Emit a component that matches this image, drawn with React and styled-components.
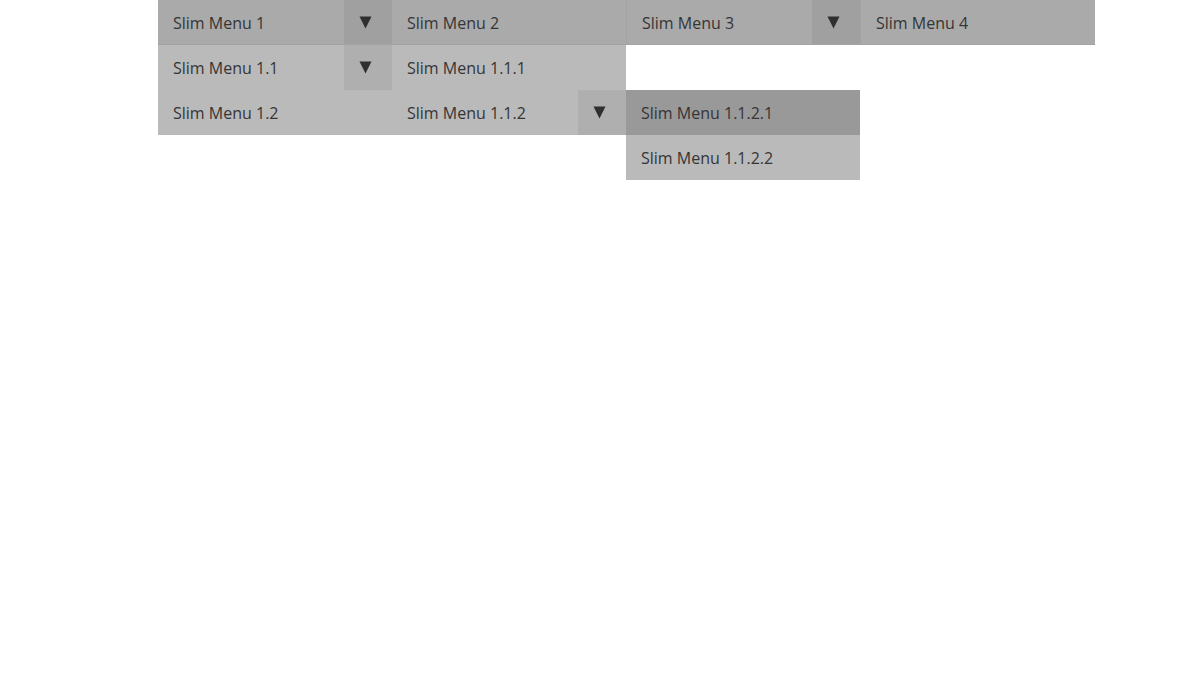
import React from "react";
import styled, { createGlobalStyle } from "styled-components";

const Global = createGlobalStyle`
  html, body { margin: 0; padding: 0; background: #fff; }
  body { font-family: "Open Sans", "Liberation Sans", sans-serif; }
`;

const Page = styled.div`
  padding-left: 158px;
  width: 1200px;
  height: 680px;
  box-sizing: border-box;
`;

const Bar = styled.ul`
  list-style: none;
  margin: 0;
  padding: 0;
  display: flex;
  width: 937px;
  background: #aaaaaa;
  border-bottom: 1px solid #a3a3a3;
`;

const Item = styled.li`
  position: relative;
  width: ${(p) => p.$w || 234}px;
  height: 44px;
  display: flex;
  padding-top: 1px;
  border-left: ${(p) => (p.$sep ? "1px solid #a2a2a2" : "none")};
  box-sizing: border-box;
`;

const Label = styled.span`
  flex: 1;
  display: flex;
  align-items: center;
  padding-left: 15px;
  font-size: 16px;
  color: #353535;
  background: ${(p) => p.$bg || "transparent"};
`;

const Toggle = styled.span`
  width: 48px;
  display: flex;
  align-items: center;
  justify-content: center;
  padding-right: 6px;
  box-sizing: border-box;
  background: ${(p) => p.$bg};
`;

const TopToggle = styled(Toggle)`
  margin-top: -1px;
`;

const Sub = styled.ul`
  list-style: none;
  margin: 0;
  padding: 0;
  position: absolute;
  top: ${(p) => p.$top}px;
  left: ${(p) => p.$left}px;
  width: 234px;
  z-index: 2;
`;

const SubItem = styled.li`
  position: relative;
  height: 45px;
  display: flex;
  background: ${(p) => (p.$hover ? "#999999" : "#bababa")};
`;

const Arrow = () => (
  <svg width="13" height="13" viewBox="0 0 13 13">
    <polygon points="0.5,0.5 12.5,0.5 6.5,12.5" fill="#2f2f2f" />
  </svg>
);

export default function App() {
  return (
    <>
      <Global />
      <Page>
        <Bar>
          <Item>
            <Label>Slim Menu 1</Label>
            <TopToggle $bg="#a0a0a0">
              <Arrow />
            </TopToggle>
            <Sub $top={45} $left={0}>
              <SubItem>
                <Label>Slim Menu 1.1</Label>
                <Toggle $bg="#afafaf">
                  <Arrow />
                </Toggle>
                <Sub $top={0} $left={234}>
                  <SubItem>
                    <Label>Slim Menu 1.1.1</Label>
                  </SubItem>
                  <SubItem>
                    <Label>Slim Menu 1.1.2</Label>
                    <Toggle $bg="#afafaf">
                      <Arrow />
                    </Toggle>
                    <Sub $top={0} $left={234}>
                      <SubItem $hover>
                        <Label>Slim Menu 1.1.2.1</Label>
                      </SubItem>
                      <SubItem>
                        <Label>Slim Menu 1.1.2.2</Label>
                      </SubItem>
                    </Sub>
                  </SubItem>
                </Sub>
              </SubItem>
              <SubItem>
                <Label>Slim Menu 1.2</Label>
              </SubItem>
            </Sub>
          </Item>
          <Item>
            <Label>Slim Menu 2</Label>
          </Item>
          <Item $sep>
            <Label>Slim Menu 3</Label>
            <TopToggle $bg="#a0a0a0">
              <Arrow />
            </TopToggle>
          </Item>
          <Item $sep $w={235}>
            <Label>Slim Menu 4</Label>
          </Item>
        </Bar>
      </Page>
    </>
  );
}
